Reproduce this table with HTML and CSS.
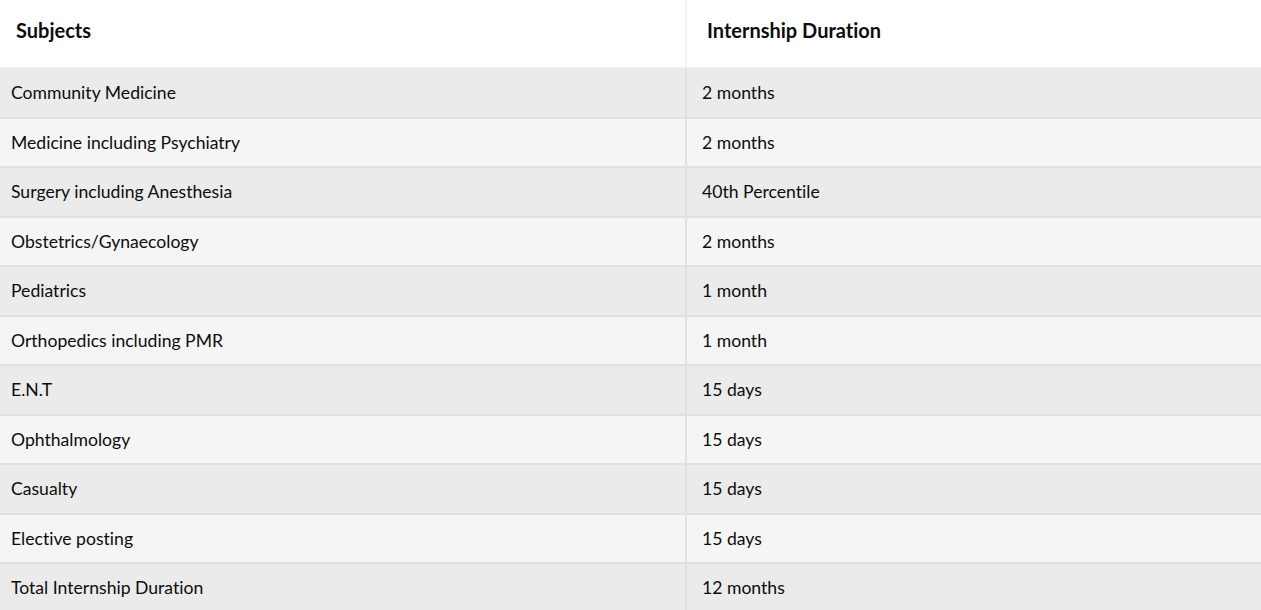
FILE: index.html
```html
<!DOCTYPE html>
<html>
<head>
<meta charset="utf-8">
<link rel="stylesheet" href="styles.css">
</head>
<body>
<table class="intern-table">
  <thead>
    <tr><th class="col-subject">Subjects</th><th class="col-duration">Internship Duration</th></tr>
  </thead>
  <tbody>
    <tr><td>Community Medicine</td><td>2 months</td></tr>
    <tr><td>Medicine including Psychiatry</td><td>2 months</td></tr>
    <tr><td>Surgery including Anesthesia</td><td>40th Percentile</td></tr>
    <tr><td>Obstetrics/Gynaecology</td><td>2 months</td></tr>
    <tr><td>Pediatrics</td><td>1 month</td></tr>
    <tr><td>Orthopedics including PMR</td><td>1 month</td></tr>
    <tr><td>E.N.T</td><td>15 days</td></tr>
    <tr><td>Ophthalmology</td><td>15 days</td></tr>
    <tr><td>Casualty</td><td>15 days</td></tr>
    <tr><td>Elective posting</td><td>15 days</td></tr>
    <tr><td>Total Internship Duration</td><td>12 months</td></tr>
  </tbody>
</table>
</body>
</html>
```
FILE: styles.css
```css
html, body {
  margin: 0;
  padding: 0;
  background: #ffffff;
}
body {
  font-family: Lato, "Liberation Sans", sans-serif;
  font-variant-ligatures: none;
  color: #0d0d0d;
}
.intern-table {
  width: 100%;
  border-collapse: collapse;
  table-layout: fixed;
}
.intern-table th {
  text-align: left;
  font-size: 20px;
  font-weight: 700;
  height: 68px;
  padding: 0 0 8px 16px;
  background: #ffffff;
  border-bottom: 2px solid #efefef;
  box-sizing: border-box;
}
.intern-table th.col-subject {
  width: 686px;
  border-right: 2px solid #f3f3f3;
}
.intern-table th.col-duration {
  padding-left: 20px;
}
.intern-table td {
  font-size: 17.6px;
  height: 47.5px;
  padding: 0 0 0 11px;
  border-bottom: 2px solid #e0e0e0;
}
.intern-table td:first-child {
  border-right: 2px solid #e0e0e0;
}
.intern-table td + td {
  padding-left: 15px;
}
.intern-table tbody tr:nth-child(odd) td {
  background: #ebebeb;
}
.intern-table tbody tr:nth-child(even) td {
  background: #f6f5f5;
}
```
